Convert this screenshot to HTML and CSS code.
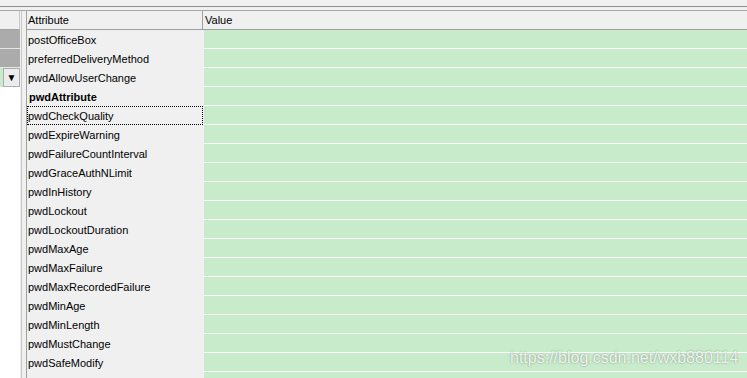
FILE: index.html
```html
<!DOCTYPE html>
<html lang="en">

<head>
    <meta charset="UTF-8">
    <title>Attributes</title>
    <link rel="stylesheet" href="styles.css">
</head>

<body>
    <div class="topBar"></div>
    <div class="main">
        <div class="sidePanel">
            <div class="sideHead"></div>
            <div class="sideItem"></div>
            <div class="sideItem"></div>
            <div class="combo">
                <div class="comboField"></div>
                <div class="comboButton">&#9660;</div>
            </div>
        </div>
        <div class="splitter"></div>
        <div class="grid">
            <div class="gridHead">
                <div class="colAttr">Attribute</div>
                <div class="colValue">Value</div>
            </div>
            <div class="row"><div class="attr">postOfficeBox</div><div class="value"></div></div>
            <div class="row"><div class="attr">preferredDeliveryMethod</div><div class="value"></div></div>
            <div class="row"><div class="attr">pwdAllowUserChange</div><div class="value"></div></div>
            <div class="row"><div class="attr boldText">pwdAttribute</div><div class="value"></div></div>
            <div class="row"><div class="attr focused">pwdCheckQuality</div><div class="value"></div></div>
            <div class="row"><div class="attr">pwdExpireWarning</div><div class="value"></div></div>
            <div class="row"><div class="attr">pwdFailureCountInterval</div><div class="value"></div></div>
            <div class="row"><div class="attr">pwdGraceAuthNLimit</div><div class="value"></div></div>
            <div class="row"><div class="attr">pwdInHistory</div><div class="value"></div></div>
            <div class="row"><div class="attr">pwdLockout</div><div class="value"></div></div>
            <div class="row"><div class="attr">pwdLockoutDuration</div><div class="value"></div></div>
            <div class="row"><div class="attr">pwdMaxAge</div><div class="value"></div></div>
            <div class="row"><div class="attr">pwdMaxFailure</div><div class="value"></div></div>
            <div class="row"><div class="attr">pwdMaxRecordedFailure</div><div class="value"></div></div>
            <div class="row"><div class="attr">pwdMinAge</div><div class="value"></div></div>
            <div class="row"><div class="attr">pwdMinLength</div><div class="value"></div></div>
            <div class="row"><div class="attr">pwdMustChange</div><div class="value"></div></div>
            <div class="row"><div class="attr">pwdSafeModify</div><div class="value"></div></div>
            <div class="row lastRow"><div class="attr"></div><div class="value"></div></div>
        </div>
    </div>
    <div class="watermark">https://blog.csdn.net/wxb880114</div>
</body>

</html>
```

FILE: styles.css
```css
body {
    margin: 0;
    background-color: #f0f0f0;
    font-family: Tahoma, "Liberation Sans", Arial, sans-serif;
    font-size: 11px;
    color: #000;
    height: 378px;
    overflow: hidden;
    position: relative;
}

.topBar {
    height: 6px;
    border-bottom: 1px solid #8e8f94;
}

.main {
    display: flex;
    margin-top: 3px;
    border-top: 1px solid #a7a7a7;
}

.sidePanel {
    width: 20px;
    background-color: #fff;
    height: 370px;
}

.sideHead {
    height: 18px;
    background-color: #f0f0f0;
    border-right: 1px solid #c8c8c8;
    border-bottom: 1px solid #a0a0a0;
}

.sideItem {
    height: 18px;
    background-color: #ababab;
    border-bottom: 1px solid #e6e6e6;
}

.combo {
    display: flex;
    height: 19px;
}

.comboField {
    width: 3px;
    background-color: #c8ebcb;
}

.comboButton {
    width: 15px;
    height: 17px;
    background-color: #ececec;
    border: 1px solid #adadad;
    font-size: 10px;
    line-height: 17px;
    text-align: center;
}

.splitter {
    width: 4px;
    margin-left: 1px;
    border-left: 1px solid #c8c8c8;
    border-right: 1px solid #a0a0a0;
    background-color: #f0f0f0;
}

.grid {
    flex: 1;
}

.gridHead {
    display: flex;
    height: 18px;
    border-bottom: 1px solid #a0a0a0;
    line-height: 18px;
}

.colAttr {
    width: 174px;
    padding-left: 1px;
    border-right: 1px solid #a0a0a0;
}

.colValue {
    flex: 1;
    padding-left: 2px;
}

.row {
    display: flex;
    height: 19px;
}

.attr {
    width: 176px;
    height: 19px;
    padding-left: 1px;
    line-height: 18px;
    white-space: nowrap;
    box-sizing: border-box;
    border: 1px solid transparent;
    border-left: none;
}

.boldText {
    font-weight: bold;
    padding-left: 2px;
}

.focused {
    border: 1px dotted #000;
    padding-left: 0;
}

.value {
    flex: 1;
    margin-left: 1px;
    background-color: #c8ebcb;
    border-bottom: 1px solid #fff;
}

.watermark {
    position: absolute;
    left: 510px;
    top: 349px;
    font-family: "Liberation Sans", Arial, sans-serif;
    font-size: 16px;
    color: rgba(255, 255, 255, 0.85);
    text-shadow: 0 0 2px rgba(0, 0, 0, 0.4);
}
```
